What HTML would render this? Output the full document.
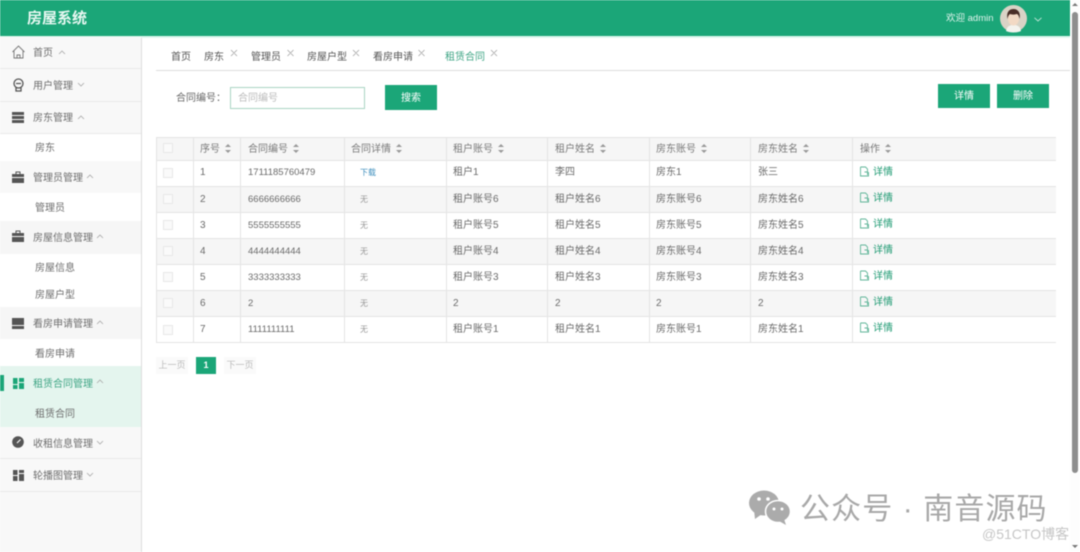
<!DOCTYPE html>
<html lang="zh"><head><meta charset="utf-8"><title>房屋系统</title>
<style>
*{box-sizing:border-box}
html,body{margin:0;padding:0;width:1080px;height:552px;overflow:hidden;background:#fff}
body{font-family:"Liberation Sans","Noto Sans CJK SC",sans-serif;color:#666;font-size:10px}
#w{position:absolute;left:0;top:0;width:1080px;height:552px;filter:blur(.4px)}
.a{position:absolute;white-space:nowrap}
.m{position:absolute;left:0;width:141px;background:#f8f8f8;border-bottom:1px solid #e9e9e9}
.s{position:absolute;left:0;width:141px;background:#fff}
.mt{position:absolute;left:33px;font-size:10px;color:#6e6e6e;white-space:nowrap;line-height:14px;margin-top:2px}
.st{position:absolute;left:35px;font-size:10px;color:#6e6e6e;white-space:nowrap;line-height:14px;margin-top:2px}
.tab{position:absolute;top:51px;line-height:14px;font-size:10px;color:#555}
.btn{position:absolute;background:#1ba678;color:#fff;text-align:center;font-size:10px}
.hl{position:absolute;left:156px;width:900px;height:1px;background:#e4e4e4}
.vl{position:absolute;top:137px;width:1px;height:206px;background:#e4e4e4}
.row{position:absolute;left:156px;width:900px;background:#f6f6f6}
.c{position:absolute;white-space:nowrap;font-size:10px;color:#6a6a6a;line-height:14px;margin-top:4px}
.n{font-size:9.5px}
.h{color:#7a7a7a}
.so{display:inline-block;position:relative;width:6px;height:9px;margin-left:5px;vertical-align:-1px}
.so:before,.so:after{content:"";position:absolute;left:0;border-left:3px solid transparent;border-right:3px solid transparent}
.so:before{top:0;border-bottom:3px solid #999}
.so:after{bottom:0;border-top:3px solid #999}
.cb{position:absolute;left:163px;width:10px;height:10px;border:1px solid #e8e8e8;background:#fafafa}
.det{position:absolute;left:873px;color:#1f9a73;font-size:10px;line-height:14px;margin-top:4px}
svg{position:absolute;overflow:visible}
</style></head><body><div id="w">
<!-- header -->
<div class="a" style="left:0;top:0;width:1070px;height:36px;background:#1ba678"></div>
<div class="a" style="left:0;top:36px;width:1070px;height:2px;background:#dff7ee"></div>
<div class="a" style="left:27px;top:9px;font-size:15px;line-height:19px;color:#e8f8f2;font-weight:bold">房屋系统</div>
<div class="a" style="left:946px;top:12px;font-size:9.5px;line-height:14px;color:#dff3ec">欢迎 admin</div>
<svg style="left:1000px;top:5px" width="27" height="27" viewBox="0 0 27 27">
<circle cx="13.5" cy="13.500" r="13.500" fill="#d9d3c6"/>
<path d="M6 26c1-5 4-6 7.500-6s6.500 1 7.500 6c-4 2-11 2-15 0z" fill="#f3f3ee"/>
<ellipse cx="13.500" cy="14" rx="5.500" ry="6.500" fill="#f2d9c4"/>
<path d="M7.500 14c-1.500-7 2-10 6-10s7.500 3 6 10c-.5-3-1.500-5-3-5-2.500 1-5 .5-6.500 0-1.500 1-2 2.500-2.500 5z" fill="#4a2e27"/>
</svg>
<svg style="left:1034px;top:17px" width="8" height="5" viewBox="0 0 8 5"><path d="M.5.800 4 4 7.500.800" fill="none" stroke="#bfe6d8" stroke-width=".9"/></svg>
<!-- sidebar -->
<div class="a" style="left:0;top:38px;width:141px;height:514px;background:#f8f8f8"></div>
<div class="a" style="left:141px;top:38px;width:1px;height:514px;background:#ddd"></div>
<div class="m" style="top:37px;height:32px"></div>
<div class="m" style="top:69px;height:33px"></div>
<div class="m" style="top:102px;height:32px"></div>
<div class="s" style="top:134px;height:27px"></div>
<div class="m" style="top:161px;height:32px;border:0"></div>
<div class="s" style="top:193px;height:28px"></div>
<div class="m" style="top:221px;height:33px;border:0;background:#f6f6f6"></div>
<div class="s" style="top:254px;height:53px"></div>
<div class="m" style="top:307px;height:32px;border:0;background:#f6f6f6"></div>
<div class="s" style="top:339px;height:27px"></div>
<div class="a" style="left:0;top:366px;width:141px;height:61px;background:#e4f5ee"></div>
<div class="a" style="left:0;top:375px;width:4px;height:16px;background:#1ba678"></div>
<div class="m" style="top:427px;height:32px"></div>
<div class="m" style="top:459px;height:33px"></div>
<!-- sidebar text -->
<div class="mt" style="top:45px">首页</div>
<div class="mt" style="top:78px">用户管理</div>
<div class="mt" style="top:110px">房东管理</div>
<div class="st" style="top:140px">房东</div>
<div class="mt" style="top:170px">管理员管理</div>
<div class="st" style="top:200px">管理员</div>
<div class="mt" style="top:230px">房屋信息管理</div>
<div class="st" style="top:260px">房屋信息</div>
<div class="st" style="top:287px">房屋户型</div>
<div class="mt" style="top:316px">看房申请管理</div>
<div class="st" style="top:346px">看房申请</div>
<div class="mt" style="top:376px;color:#3fa585">租赁合同管理</div>
<div class="st" style="top:406px">租赁合同</div>
<div class="mt" style="top:436px">收租信息管理</div>
<div class="mt" style="top:468px">轮播图管理</div>
<!-- chevrons -->
<svg style="left:0;top:0" width="141" height="490" viewBox="0 0 141 490" fill="none" stroke="#aaa" stroke-width=".8">
<path d="M59 54 62 51 65 54M78 83 81 86 84 83M78 119 81 116 84 119M87 178 90 175 93 178M97 238 100 235 103 238M97 324 100 321 103 324M97 383 100 380 103 383M97 441 100 444 103 441M87 473 90 476 93 473"/>
</svg>
<!-- icons -->
<svg style="left:12px;top:45px" width="13" height="14" viewBox="0 0 13 14" fill="none" stroke="#777" stroke-width=".9"><path d="M.5 7 6.500 1l6 6M2 6v7h9V6M5 13v-3h3v3"/></svg>
<svg style="left:13px;top:78px" width="11" height="14" viewBox="0 0 11 14" fill="none" stroke="#555" stroke-width="1.300"><circle cx="5.500" cy="5.500" r="4.500"/><path d="M3 9.500V13h5V9.500M3 5.500h5"/></svg>
<svg style="left:12px;top:112px" width="12" height="11" viewBox="0 0 12 11" fill="#555"><rect width="12" height="3"/><rect y="4" width="12" height="3"/><rect y="8" width="12" height="3"/></svg>
<svg style="left:12px;top:171px" width="12" height="12" viewBox="0 0 12 12" fill="#555"><path d="M0 3h12v3H0zM0 7h12v5H0zM3.500 3V.5h5V3H7.500V1.500h-3V3z"/></svg>
<svg style="left:12px;top:230px" width="12" height="12" viewBox="0 0 12 12" fill="#555"><path d="M0 3h12v3H0zM0 7h12v5H0zM3.500 3V.5h5V3H7.500V1.500h-3V3z"/></svg>
<svg style="left:12px;top:318px" width="12" height="11" viewBox="0 0 12 11" fill="#555"><rect width="12" height="7"/><rect y="8" width="12" height="3"/></svg>
<svg style="left:13px;top:378px" width="11" height="11" viewBox="0 0 11 11" fill="#1ba678"><rect width="4.500" height="6"/><rect y="7" width="4.500" height="4"/><rect x="6" width="5" height="4"/><rect x="6" y="5" width="5" height="6"/></svg>
<svg style="left:12px;top:436px" width="12" height="12" viewBox="0 0 12 12"><circle cx="6" cy="6" r="5.800" fill="#555"/><path d="M5 7 8.500 3.500" stroke="#f8f8f8" stroke-width="1.200"/></svg>
<svg style="left:13px;top:470px" width="11" height="11" viewBox="0 0 11 11" fill="#555"><rect width="4.500" height="5"/><rect y="6" width="4.500" height="5"/><rect x="6" width="5" height="3"/><rect x="6" y="4" width="5" height="7"/></svg>
<!-- tabs -->
<div class="a" style="left:156px;top:70px;width:914px;height:1px;background:#ddd"></div>
<div class="tab" style="left:171px">首页</div>
<div class="tab" style="left:204px">房东</div>
<div class="tab" style="left:251px">管理员</div>
<div class="tab" style="left:307px">房屋户型</div>
<div class="tab" style="left:373px">看房申请</div>
<div class="tab" style="left:445px;color:#3fa585">租赁合同</div>
<svg style="left:0;top:0" width="520" height="60" viewBox="0 0 520 60" fill="none" stroke="#999" stroke-width=".7"><path d="M231 50l6 6m0-6-6 6M287.500 50l6 6m0-6-6 6M353 50l6 6m0-6-6 6M418.500 50l6 6m0-6-6 6M491 50l6 6m0-6-6 6"/></svg>
<!-- search -->
<div class="a" style="left:176px;top:92px;line-height:14px;color:#666">合同编号：</div>
<div class="a" style="left:230px;top:87px;width:135px;height:22px;border:1px solid #a9d5c4;color:#bbb;line-height:22px;padding-left:7px">合同编号</div>
<div class="btn" style="left:385px;top:85px;width:52px;height:25px;line-height:27px">搜索</div>
<div class="btn" style="left:938px;top:84px;width:52px;height:24px;line-height:26px">详情</div>
<div class="btn" style="left:997px;top:84px;width:52px;height:24px;line-height:26px">删除</div>
<!-- table -->
<div class="row" style="top:137px;height:23px"></div>
<div class="row" style="top:186px;height:26px"></div>
<div class="row" style="top:238px;height:26px"></div>
<div class="row" style="top:290px;height:26px"></div>
<div class="hl" style="top:137px"></div><div class="hl" style="top:160px"></div><div class="hl" style="top:186px"></div><div class="hl" style="top:212px"></div><div class="hl" style="top:238px"></div><div class="hl" style="top:264px"></div><div class="hl" style="top:290px"></div><div class="hl" style="top:316px"></div><div class="hl" style="top:342px"></div>
<div class="vl" style="left:156px"></div><div class="vl" style="left:193px"></div><div class="vl" style="left:240px"></div><div class="vl" style="left:344px"></div><div class="vl" style="left:446px"></div><div class="vl" style="left:547px"></div><div class="vl" style="left:649px"></div><div class="vl" style="left:750px"></div><div class="vl" style="left:852px"></div>
<div class="cb" style="top:143px"></div><div class="cb" style="top:168px"></div><div class="cb" style="top:194px"></div><div class="cb" style="top:220px"></div><div class="cb" style="top:246px"></div><div class="cb" style="top:272px"></div><div class="cb" style="top:298px"></div><div class="cb" style="top:325px"></div>
<div class="c h" style="left:200px;top:139px">序号<i class="so"></i></div>
<div class="c h" style="left:248px;top:139px">合同编号<i class="so"></i></div>
<div class="c h" style="left:351px;top:139px">合同详情<i class="so"></i></div>
<div class="c h" style="left:453px;top:139px">租户账号<i class="so"></i></div>
<div class="c h" style="left:555px;top:139px">租户姓名<i class="so"></i></div>
<div class="c h" style="left:656px;top:139px">房东账号<i class="so"></i></div>
<div class="c h" style="left:758px;top:139px">房东姓名<i class="so"></i></div>
<div class="c h" style="left:860px;top:139px">操作<i class="so"></i></div>
<div class="c" style="left:200px;top:162px">1</div><div class="c n" style="left:248px;top:162px">1711185760479</div><div class="c" style="left:360px;top:162px;font-size:8px;color:#3c8dbc">下载</div><div class="c" style="left:453px;top:162px">租户1</div><div class="c" style="left:555px;top:162px">李四</div><div class="c" style="left:656px;top:162px">房东1</div><div class="c" style="left:758px;top:162px">张三</div>
<div class="c" style="left:200px;top:189px">2</div><div class="c n" style="left:248px;top:189px">6666666666</div><div class="c" style="left:360px;top:189px;font-size:8px;color:#999">无</div><div class="c" style="left:453px;top:189px">租户账号6</div><div class="c" style="left:555px;top:189px">租户姓名6</div><div class="c" style="left:656px;top:189px">房东账号6</div><div class="c" style="left:758px;top:189px">房东姓名6</div>
<div class="c" style="left:200px;top:215px">3</div><div class="c n" style="left:248px;top:215px">5555555555</div><div class="c" style="left:360px;top:215px;font-size:8px;color:#999">无</div><div class="c" style="left:453px;top:215px">租户账号5</div><div class="c" style="left:555px;top:215px">租户姓名5</div><div class="c" style="left:656px;top:215px">房东账号5</div><div class="c" style="left:758px;top:215px">房东姓名5</div>
<div class="c" style="left:200px;top:241px">4</div><div class="c n" style="left:248px;top:241px">4444444444</div><div class="c" style="left:360px;top:241px;font-size:8px;color:#999">无</div><div class="c" style="left:453px;top:241px">租户账号4</div><div class="c" style="left:555px;top:241px">租户姓名4</div><div class="c" style="left:656px;top:241px">房东账号4</div><div class="c" style="left:758px;top:241px">房东姓名4</div>
<div class="c" style="left:200px;top:267px">5</div><div class="c n" style="left:248px;top:267px">3333333333</div><div class="c" style="left:360px;top:267px;font-size:8px;color:#999">无</div><div class="c" style="left:453px;top:267px">租户账号3</div><div class="c" style="left:555px;top:267px">租户姓名3</div><div class="c" style="left:656px;top:267px">房东账号3</div><div class="c" style="left:758px;top:267px">房东姓名3</div>
<div class="c" style="left:200px;top:293px">6</div><div class="c n" style="left:248px;top:293px">2</div><div class="c" style="left:360px;top:293px;font-size:8px;color:#999">无</div><div class="c" style="left:453px;top:293px">2</div><div class="c" style="left:555px;top:293px">2</div><div class="c" style="left:656px;top:293px">2</div><div class="c" style="left:758px;top:293px">2</div>
<div class="c" style="left:200px;top:319px">7</div><div class="c n" style="left:248px;top:319px">1111111111</div><div class="c" style="left:360px;top:319px;font-size:8px;color:#999">无</div><div class="c" style="left:453px;top:319px">租户账号1</div><div class="c" style="left:555px;top:319px">租户姓名1</div><div class="c" style="left:656px;top:319px">房东账号1</div><div class="c" style="left:758px;top:319px">房东姓名1</div>
<div class="det" style="top:162px">详情</div><div class="det" style="top:188px">详情</div><div class="det" style="top:214px">详情</div><div class="det" style="top:240px">详情</div><div class="det" style="top:266px">详情</div><div class="det" style="top:292px">详情</div><div class="det" style="top:318px">详情</div>
<svg style="left:860px;top:1px" width="10" height="340" viewBox="0 0 10 340" fill="none" stroke="#5fb598" stroke-width=".9">
<path d="M.5 166h5l2 2v2.500M.5 166v9h8v-4M4.500 171h3v3"/>
<path d="M.5 192h5l2 2v2.500M.5 192v9h8v-4M4.500 197h3v3"/>
<path d="M.5 218h5l2 2v2.500M.5 218v9h8v-4M4.500 223h3v3"/>
<path d="M.5 244h5l2 2v2.500M.5 244v9h8v-4M4.500 249h3v3"/>
<path d="M.5 270h5l2 2v2.500M.5 270v9h8v-4M4.500 275h3v3"/>
<path d="M.5 296h5l2 2v2.500M.5 296v9h8v-4M4.500 301h3v3"/>
<path d="M.5 322h5l2 2v2.500M.5 322v9h8v-4M4.500 327h3v3"/>
</svg>
<!-- pagination -->
<div class="a" style="left:156px;top:357px;width:32px;height:17px;background:#fafafa;color:#bbb;font-size:9px;line-height:17px;text-align:center">上一页</div>
<div class="a" style="left:196px;top:357px;width:20px;height:17px;background:#1ba678;color:#fff;font-weight:bold;font-size:9px;line-height:17px;text-align:center">1</div>
<div class="a" style="left:224px;top:357px;width:32px;height:17px;background:#fafafa;color:#bbb;font-size:9px;line-height:17px;text-align:center">下一页</div>
<!-- scrollbar -->
<div class="a" style="left:1070px;top:0;width:10px;height:552px;background:#fdfdfd"></div>
<div class="a" style="left:1072px;top:12px;width:6px;height:461px;border-radius:3px;background:#8e8e8e"></div>
<svg style="left:1072px;top:3px" width="6" height="546" viewBox="0 0 6 546" fill="#777"><path d="M0 3 3 0l3 3zM0 542l3 3 3-3z"/></svg>
<!-- watermark -->
<svg style="left:749px;top:490px" width="42" height="35" viewBox="0 0 42 35" fill="#ababab">
<ellipse cx="15" cy="13" rx="15" ry="12.500"/><path d="M5 20 6 29 13 24z"/>
<ellipse cx="29" cy="21.500" rx="12.500" ry="11" stroke="#fff" stroke-width="1.500"/><path d="M35 29 37 35 30 31z"/>
<circle cx="10" cy="9" r="1.800" fill="#fff"/><circle cx="19" cy="9" r="1.800" fill="#fff"/><circle cx="25" cy="19" r="1.500" fill="#fff"/><circle cx="33" cy="19" r="1.500" fill="#fff"/>
</svg>
<div class="a" style="left:800px;top:492px;font-size:30px;line-height:36px;color:#a8a8a8;letter-spacing:1.100px">公众号 · 南音源码</div>
<div class="a" style="left:982px;top:526px;font-size:14px;line-height:17px;color:#c6c6c6">@51CTO博客</div>
</div></body></html>
